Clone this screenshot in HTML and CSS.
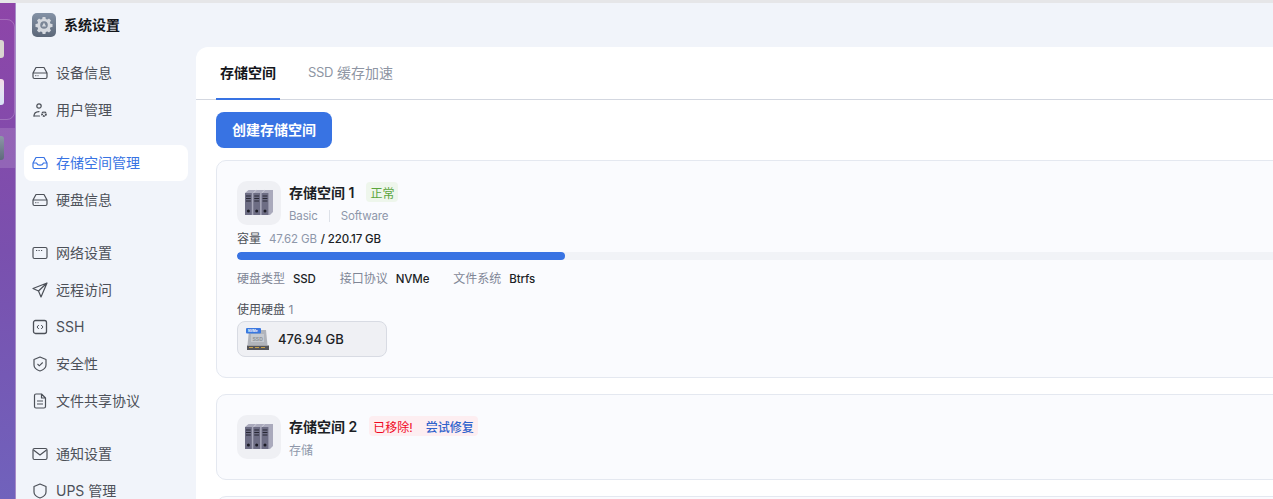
FILE: index.html
```html
<!DOCTYPE html>
<html lang="zh-CN">
<head>
<meta charset="utf-8">
<title>系统设置</title>
<link rel="stylesheet" href="styles.css">
</head>
<body>
<svg class="defs" width="0" height="0" aria-hidden="true">
  <defs>
    <linearGradient id="gearbg" x1="0" y1="0" x2="0" y2="1"><stop offset="0" stop-color="#8492a6"/><stop offset="1" stop-color="#5c6778"/></linearGradient>
    <symbol id="binders" viewBox="0 0 28 28">
      <path d="M0 4 3.500 1H28v22l-3 3H0z" fill="#aaaabc"/>
      <path d="M8.300 4 11.500 1M16.600 4 19.800 1" stroke="#d5d5df" stroke-width=".8"/>
      <path d="M0 4h6.800v22H0zM8.300 4h6.800v22H8.300zM16.600 4h6.800v22h-6.800z" fill="#6d6d84"/>
      <path d="M1 6.500h4.800v1H1zM1 9h4.800v1H1zM1 11.500h4.800v1H1zM9.300 6.500h4.800v1H9.300zM9.300 9h4.800v1H9.300zM9.300 11.500h4.800v1H9.300zM17.600 6.500h4.800v1h-4.800zM17.600 9h4.800v1h-4.800zM17.600 11.500h4.800v1h-4.800z" fill="#282834"/>
      <circle cx="3.400" cy="22" r="1.500" fill="#1c1c26"/>
      <circle cx="11.700" cy="22" r="1.500" fill="#1c1c26"/>
      <circle cx="20" cy="22" r="1.500" fill="#1c1c26"/>
    </symbol>
    <symbol id="i-disk" viewBox="0 0 16 16">
      <path d="M4 2.500h8L15 8v4a1.500 1.500 0 0 1-1.500 1.500h-11A1.500 1.500 0 0 1 1 12V8z M1 8h14" fill="none" stroke="currentColor" stroke-width="1.200" stroke-linejoin="round"/>
      <path d="M3.200 10.700h1.200M5.500 10.700h1" stroke="currentColor" stroke-width="1"/>
    </symbol>
    <symbol id="i-inbox" viewBox="0 0 16 16">
      <path d="M4 2.500h8L15 8v4a1.500 1.500 0 0 1-1.500 1.500h-11A1.500 1.500 0 0 1 1 12V8z" fill="none" stroke="currentColor" stroke-width="1.200" stroke-linejoin="round"/>
      <path d="M1 8h3.500q1 2.200 3.500 2.200T11.500 8H15" fill="none" stroke="currentColor" stroke-width="1.200"/>
    </symbol>
    <symbol id="i-user" viewBox="0 0 16 16">
      <circle cx="7" cy="4" r="2.200" fill="none" stroke="currentColor" stroke-width="1.200"/>
      <path d="M2 14c0-2.800 2-4.300 5-4.400" fill="none" stroke="currentColor" stroke-width="1.200" stroke-linecap="round"/>
      <path d="M2 14h5.500" stroke="currentColor" stroke-width="1.200" stroke-linecap="round"/>
      <circle cx="12" cy="12" r="2" fill="none" stroke="currentColor" stroke-width="1.800" stroke-dasharray="1.600 .6"/>
    </symbol>
    <symbol id="i-net" viewBox="0 0 16 16">
      <rect x="1" y="2.500" width="14" height="11" rx="1.500" fill="none" stroke="currentColor" stroke-width="1.200"/>
      <path d="M4 5.500h1.200M6.500 5.500h1.200M9 5.500h1.200" stroke="currentColor" stroke-width="1"/>
    </symbol>
    <symbol id="i-send" viewBox="0 0 16 16">
      <path d="M15 1 1 6.500l5.500 2.500L9 15z M15 1 6.500 9" fill="none" stroke="currentColor" stroke-width="1.200" stroke-linejoin="round"/>
    </symbol>
    <symbol id="i-ssh" viewBox="0 0 16 16">
      <rect x="1.500" y="1.500" width="13" height="13" rx="2" fill="none" stroke="currentColor" stroke-width="1.300"/>
      <path d="M6.800 6 5 8l1.800 2M9.200 6 11 8l-1.800 2" fill="none" stroke="currentColor" stroke-width="1"/>
    </symbol>
    <symbol id="i-shield" viewBox="0 0 16 16">
      <path d="M8 1 14 3.500v5.500c0 3-3 5-6 6-3-1-6-3-6-6V3.500z" fill="none" stroke="currentColor" stroke-width="1.200" stroke-linejoin="round"/>
      <path d="M5.500 8 7.300 9.800 10.700 6.500" fill="none" stroke="currentColor" stroke-width="1.100"/>
    </symbol>
    <symbol id="i-doc" viewBox="0 0 16 16">
      <path d="M2.500 2.500A1.500 1.500 0 0 1 4 1h5.500L13.500 5v8.500A1.500 1.500 0 0 1 12 15H4a1.500 1.500 0 0 1-1.500-1.500z M9.500 1v4h4" fill="none" stroke="currentColor" stroke-width="1.200" stroke-linejoin="round"/>
      <path d="M5 8h6M5 11h6" stroke="currentColor" stroke-width="1.100"/>
    </symbol>
    <symbol id="i-mail" viewBox="0 0 16 16">
      <rect x="1" y="2.500" width="14" height="11" rx="1.500" fill="none" stroke="currentColor" stroke-width="1.200"/>
      <path d="M1.500 4 8 9l6.500-5" fill="none" stroke="currentColor" stroke-width="1.200"/>
    </symbol>
    <symbol id="i-hex" viewBox="0 0 16 16">
      <path d="M8 1 14 3.500v5.500c0 3-3 5-6 6-3-1-6-3-6-6V3.500z" fill="none" stroke="currentColor" stroke-width="1.200" stroke-linejoin="round"/>
    </symbol>
  </defs>
</svg>

<div class="topline"></div>
<div class="screen">
  <div class="desktop" aria-hidden="true">
    <div class="dock"></div>
    <div class="dock-app dock-app-a"></div>
    <div class="dock-app dock-app-b"></div>
    <div class="dock-active"></div>
    <div class="dock-app dock-app-c"></div>
  </div>

  <div class="window">
    <header class="titlebar">
      <svg class="app-icon" viewBox="0 0 24 24">
        <rect width="24" height="24" rx="5" fill="url(#gearbg)"/>
        <path d="M10.600 4h2.800l.4 2 1.500.6 1.700-1.100 2 2-1.100 1.700.6 1.500 2 .4v2.800l-2 .4-.6 1.500 1.100 1.700-2 2-1.700-1.100-1.500.6-.4 2h-2.800l-.4-2-1.500-.6-1.700 1.100-2-2 1.100-1.700-.6-1.500-2-.4v-2.800l2-.4.6-1.500-1.100-1.700 2-2 1.700 1.100 1.500-.6z" fill="#d5d8de"/>
        <circle cx="12" cy="12" r="3.800" fill="#7b8596"/>
        <path d="M12 9.600 14.100 13.400H9.900z" fill="#d5d8de"/>
      </svg>
      <span class="app-title">系统设置</span>
    </header>

    <div class="body">
      <nav class="sidebar">
        <div class="nav-group">
          <a class="nav-item"><svg class="nav-ico"><use href="#i-disk"/></svg><span class="nav-label">设备信息</span></a>
          <a class="nav-item"><svg class="nav-ico"><use href="#i-user"/></svg><span class="nav-label">用户管理</span></a>
        </div>
        <div class="nav-group">
          <a class="nav-item is-active"><svg class="nav-ico"><use href="#i-inbox"/></svg><span class="nav-label">存储空间管理</span></a>
          <a class="nav-item"><svg class="nav-ico"><use href="#i-disk"/></svg><span class="nav-label">硬盘信息</span></a>
        </div>
        <div class="nav-group">
          <a class="nav-item"><svg class="nav-ico"><use href="#i-net"/></svg><span class="nav-label">网络设置</span></a>
          <a class="nav-item"><svg class="nav-ico"><use href="#i-send"/></svg><span class="nav-label">远程访问</span></a>
          <a class="nav-item"><svg class="nav-ico"><use href="#i-ssh"/></svg><span class="nav-label">SSH</span></a>
          <a class="nav-item"><svg class="nav-ico"><use href="#i-shield"/></svg><span class="nav-label">安全性</span></a>
          <a class="nav-item"><svg class="nav-ico"><use href="#i-doc"/></svg><span class="nav-label">文件共享协议</span></a>
        </div>
        <div class="nav-group">
          <a class="nav-item"><svg class="nav-ico"><use href="#i-mail"/></svg><span class="nav-label">通知设置</span></a>
          <a class="nav-item"><svg class="nav-ico"><use href="#i-hex"/></svg><span class="nav-label">UPS 管理</span></a>
        </div>
      </nav>

      <main class="content">
        <div class="tabs">
          <div class="tab is-current">存储空间</div>
          <div class="tab"><span class="tab-latin">SSD</span>&nbsp;缓存加速</div>
        </div>
        <div class="pane">
          <button class="primary">创建存储空间</button>

          <section class="card">
            <div class="card-head">
              <div class="vol-icon"><svg class="binders"><use href="#binders"/></svg></div>
              <div class="vol-text">
                <div class="vol-title"><span class="vol-name">存储空间 1</span><span class="tag tag-ok">正常</span></div>
                <div class="vol-meta"><span class="latin">Basic</span><i class="sep"></i><span class="latin">Software</span></div>
              </div>
            </div>
            <div class="capacity"><span class="cap-label">容量</span><span class="cap-used latin">47.62 GB</span><span class="cap-total latin">/ 220.17 GB</span></div>
            <div class="bar"><div class="bar-fill" style="width:21.63%"></div></div>
            <div class="specs">
              <div class="spec"><span class="spec-k">硬盘类型</span><span class="spec-v latin">SSD</span></div>
              <div class="spec"><span class="spec-k">接口协议</span><span class="spec-v latin">NVMe</span></div>
              <div class="spec"><span class="spec-k">文件系统</span><span class="spec-v latin">Btrfs</span></div>
            </div>
            <div class="disks-label">使用硬盘 <span class="disks-count">1</span></div>
            <div class="disk">
              <svg class="disk-ico" viewBox="0 0 23 23">
                <path d="M3 2h17l1.500 15h-20z" fill="#b1b4bb"/>
                <rect x="5" y="6" width="13" height="8" fill="#c6c9cf"/>
                <text x="6.500" y="12.500" class="disk-ssd">SSD</text>
                <rect x="1" y="17.500" width="22" height="4.500" fill="#55555a"/>
                <path d="M3 19.500h4M9 19.500h4M15 19.500h4" stroke="#c9a24c" stroke-width="1"/>
                <rect y="0" width="15" height="5.500" rx="1" fill="#3b78e0"/>
                <text x="2" y="4.200" class="disk-tag">NVMe</text>
              </svg>
              <span class="disk-size">476.94 GB</span>
            </div>
          </section>

          <section class="card card-2">
            <div class="card-head">
              <div class="vol-icon"><svg class="binders"><use href="#binders"/></svg></div>
              <div class="vol-text">
                <div class="vol-title"><span class="vol-name">存储空间 2</span><span class="tag tag-bad"><span class="bad-text">已移除!</span><span class="bad-link">尝试修复</span></span></div>
                <div class="vol-meta"><span>存储</span></div>
              </div>
            </div>
          </section>

          <section class="card card-3"></section>
        </div>
      </main>
    </div>
  </div>
</div>
</body>
</html>
```
FILE: styles.css
```css
* { box-sizing: border-box; }
html, body { margin: 0; height: 100%; }
body {
  width: 1273px;
  height: 499px;
  overflow: hidden;
  display: flex;
  flex-direction: column;
  background: #f1f4fa;
  font-family: Inter, "Noto Sans CJK SC", "Noto Sans", sans-serif;
  font-size: 14px;
  color: #1c1f26;
}
.defs { position: absolute; }
.topline { height: 3px; flex: none; background: #e6e6e8; }
.screen { flex: 1; min-height: 0; display: flex; }

.desktop {
  position: relative;
  width: 16px;
  flex: none;
  background: linear-gradient(180deg, #8e45a8 0%, #7a50ae 50%, #7062bc 100%);
  border-right: 1px solid #a78cc8;
  overflow: hidden;
}
.dock {
  position: absolute;
  left: -20px;
  top: 16px;
  width: 35px;
  height: 101px;
  border: 1px solid rgba(255, 255, 255, .22);
  border-radius: 8px;
}
.dock-active {
  position: absolute;
  left: 0;
  right: 0;
  top: 125px;
  height: 40px;
  background: rgba(255, 255, 255, .14);
}
.dock-app { position: absolute; left: -8px; width: 12px; border-radius: 3px; z-index: 1; }
.dock-app-a { top: 37px; height: 18px; background: #d9d5d0; }
.dock-app-b { top: 76px; height: 26px; background: linear-gradient(180deg, #f4dbe6, #e4e4f2 50%, #d8e2f5); }
.dock-app-c { top: 133px; height: 24px; background: linear-gradient(180deg, #8d97a8, #5f6a7c); }

.window { flex: 1; min-width: 0; display: flex; flex-direction: column; background: #f1f4fa; }
.titlebar { height: 44px; flex: none; display: flex; align-items: center; gap: 8px; padding: 0 0 0 16px; }
.app-icon { width: 24px; height: 24px; flex: none; }
.app-title { font-size: 14px; font-weight: 700; color: #14161b; padding-bottom: 2px; }

.body { flex: 1; min-height: 0; display: flex; }
.sidebar {
  width: 180px;
  flex: none;
  padding: 8px 8px 0;
  display: flex;
  flex-direction: column;
  gap: 17px;
}
.nav-group { display: flex; flex-direction: column; gap: 1px; }
.nav-item {
  height: 36px;
  flex: none;
  display: flex;
  align-items: center;
  gap: 8px;
  padding: 0 8px;
  border-radius: 8px;
  color: #4c5058;
  font-size: 14px;
}
.nav-label { padding-bottom: 2px; }
.nav-item.is-active { background: #fff; color: #3873e3; }
.nav-ico { width: 16px; height: 16px; flex: none; }

.content {
  flex: 1;
  min-width: 0;
  background: #fff;
  border-top-left-radius: 12px;
  overflow: hidden;
  display: flex;
  flex-direction: column;
}
.tabs {
  height: 53px;
  flex: none;
  display: flex;
  padding-left: 20px;
  gap: 24px;
  border-bottom: 1px solid #d3d7e0;
}
.tab {
  height: 53px;
  padding: 0 4px 4px;
  display: flex;
  align-items: center;
  color: #8e95a3;
  font-size: 14px;
}
.tab-latin { font-size: 13px; letter-spacing: -.3px; }
.tab.is-current { color: #14161b; font-weight: 700; border-bottom: 2px solid #3873e3; padding-bottom: 2px; }

.pane { padding: 12px 0 0 20px; }
.primary {
  display: block;
  width: 116px;
  height: 36px;
  border: 0;
  border-radius: 8px;
  background: #3873e3;
  color: #fff;
  font: 700 14px Inter, "Noto Sans CJK SC", sans-serif;
  padding: 0 0 2px;
}
.card {
  width: 1558px;
  margin-top: 12px;
  padding: 20px;
  background: #fafbfe;
  border: 1px solid #e4e8f0;
  border-radius: 10px;
}
.card-2 { margin-top: 16px; height: 86px; }
.card-3 { margin-top: 16px; height: 60px; }

.card-head { display: flex; align-items: center; gap: 8px; }
.vol-icon {
  width: 44px;
  height: 44px;
  flex: none;
  border-radius: 10px;
  background: #eff0f4;
  display: flex;
  align-items: center;
  justify-content: center;
}
.binders { width: 28px; height: 28px; }
.vol-text { display: flex; flex-direction: column; gap: 5px; }
.vol-title { display: flex; align-items: center; gap: 12px; height: 20px; }
.vol-name { font-size: 14px; font-weight: 600; color: #1c1f26; white-space: nowrap; }
.tag { display: inline-flex; align-items: center; height: 20px; padding: 1px 4px 0; border-radius: 4px; font-size: 12px; white-space: nowrap; }
.tag-ok { background: #eef6ec; color: #5aa53c; }
.tag-bad { background: #fdeef1; gap: 13px; }
.bad-text { color: #f0081e; }
.bad-link { color: #2f62cc; font-weight: 500; }
.vol-meta { display: flex; align-items: center; font-size: 12px; color: #8e97aa; height: 18px; }
.sep { width: 1px; height: 12px; background: #dde1e8; margin: 0 11px; }
.latin { font-size: 11.5px; letter-spacing: -.15px; }

.capacity { display: flex; align-items: baseline; gap: 8px; margin-top: 4px; font-size: 12px; height: 16px; }
.cap-label { color: #4c5058; }
.cap-used { color: #8e97aa; }
.cap-total { margin-left: -4px; color: #1c1f26; font-weight: 500; }

.bar { height: 8px; margin-top: 7px; border-radius: 4px; background: #f1f3f7; overflow: hidden; }
.bar-fill { height: 100%; background: #3873e3; border-radius: 4px; }

.specs { display: flex; gap: 24px; margin-top: 8px; font-size: 12px; height: 18px; align-items: center; }
.spec { display: flex; align-items: baseline; gap: 8px; }
.spec-k { color: #7f8696; }
.spec-v { color: #1c1f26; font-weight: 500; }

.disks-label { margin-top: 15px; font-size: 12px; height: 18px; line-height: 18px; color: #4c5058; }
.disks-count { color: #7f8696; }
.disk {
  margin-top: 2px;
  width: 150px;
  height: 36px;
  display: flex;
  align-items: center;
  gap: 9px;
  padding-left: 8px;
  background: #eff0f4;
  border: 1px solid #d8dbe3;
  border-radius: 8px;
}
.disk-ico { width: 23px; height: 23px; flex: none; }
.disk-ssd { font: 700 5px "Liberation Sans", sans-serif; fill: #8f9298; }
.disk-tag { font: 700 3.500px "Liberation Sans", sans-serif; fill: #fff; }
.disk-size { font-size: 13px; font-weight: 500; color: #1c1f26; }
```
